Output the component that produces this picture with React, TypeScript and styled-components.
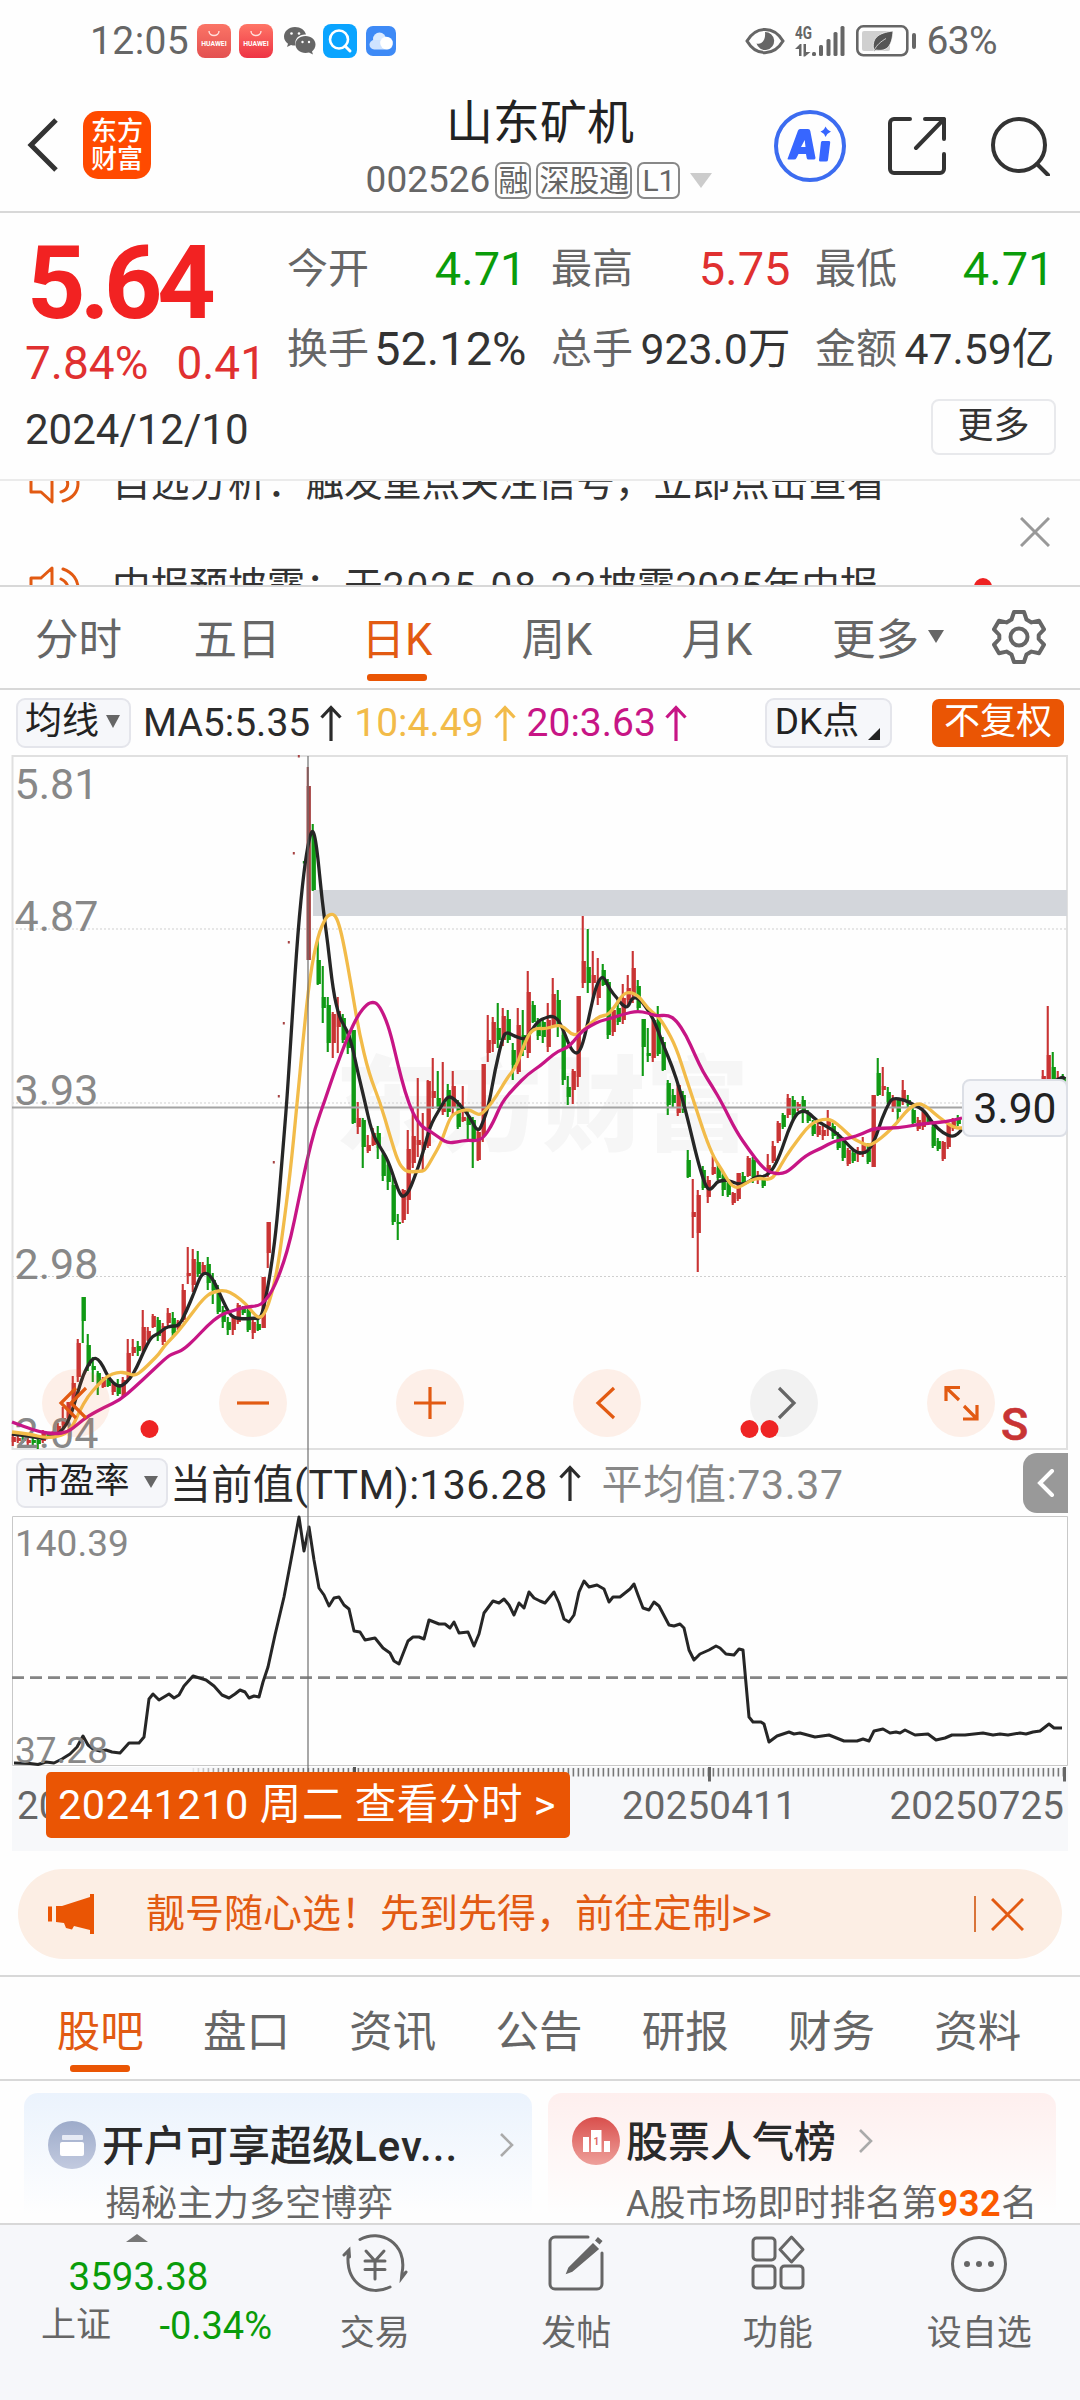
import React from "react";
import styled, { createGlobalStyle } from "styled-components";

const ORANGE = "#ea5504";
const ORANGE_TEXT = "#e25a12";
const RED = "#e03030";
const GREEN = "#0a9c0a";
const INK = "#2b2b2b";
const GREY = "#666";
const LINE = "#d8d8d8";

const Global = createGlobalStyle`
  * { box-sizing: border-box; }
  body { margin: 0; background: #fff; }
  svg { display: block; flex: none; }
`;

const Screen = styled.main`
  width: 1080px;
  height: 2400px;
  overflow: hidden;
  display: flex;
  flex-direction: column;
  background: #fefefe;
  color: ${INK};
  font-family: Roboto, "Noto Sans CJK SC", sans-serif;
  white-space: nowrap;
`;

/* ---------- status bar ---------- */

const StatusBar = styled.header`
  height: 82px;
  padding: 0 83px 0 90px;
  display: flex;
  align-items: center;
  justify-content: space-between;
  color: ${GREY};
`;
const StatusGroup = styled.div`
  display: flex;
  align-items: center;
`;
const StatusText = styled.span<{ $spacing?: number }>`
  font-size: 39px;
  line-height: 82px;
  letter-spacing: ${(p) => p.$spacing ?? 0}px;
`;

/* ---------- title bar ---------- */

const TitleBar = styled.div`
  height: 131px;
  padding: 0 30px 0 27px;
  border-bottom: 2px solid ${LINE};
  display: grid;
  grid-template-columns: 320px 1fr 320px;
`;
const TitleLeft = styled.div`
  display: flex;
  align-items: center;
  gap: 26px;
  padding-bottom: 3px;
`;
const BrandLogo = styled.div`
  width: 68px;
  height: 68px;
  margin-left: -2px;
  border-radius: 15px;
  background: #ff4a00;
  color: #fff;
  font-size: 26px;
  font-weight: 500;
  line-height: 28px;
  padding-top: 6px;
  text-align: center;
`;
const TitleMiddle = styled.div`
  display: flex;
  flex-direction: column;
  align-items: center;
`;
const StockName = styled.h1`
  margin: 13px 0 0 3px;
  font-size: 47px;
  font-weight: 400;
  line-height: 56px;
  color: #222;
`;
const CodeRow = styled.div`
  display: flex;
  align-items: center;
  height: 38px;
  margin: 10px 0 0 1px;
  color: ${GREY};
  gap: 5px;
`;
const Code = styled.span`
  font-size: 37px;
  line-height: 38px;
`;
const Tag = styled.span`
  height: 37px;
  padding: 0 1px;
  border: 2px solid #888;
  border-radius: 7px;
  font-size: 30px;
  line-height: 33px;
`;
const LevelTag = styled(Tag)`
  padding: 0 3px;
`;
const TitleRight = styled.div`
  display: flex;
  align-items: center;
  justify-content: flex-end;
  gap: 42px;
  padding-bottom: 2px;
`;

/* ---------- quote ---------- */

const Quote = styled.section`
  height: 268px;
  border-bottom: 2px solid #ebebeb;
  padding: 18px 24px 0 25px;
`;
const QuoteTop = styled.div`
  display: flex;
  height: 162px;
`;
const PriceBlock = styled.div`
  width: 262px;
  color: ${RED};
`;
const Price = styled.div`
  margin-left: 2px;
  font-size: 102px;
  font-weight: 700;
  line-height: 104px;
  letter-spacing: -5.5px;
  color: #f22222;
`;
const Change = styled.div`
  display: flex;
  gap: 28px;
  font-size: 46px;
  line-height: 56px;
`;
const Stats = styled.div`
  display: grid;
  grid-template-columns: repeat(3, 239.5px);
  grid-auto-rows: 80px;
  column-gap: 24.5px;
  margin-top: -2px;
`;
const Stat = styled.div`
  display: flex;
  justify-content: space-between;
  align-items: center;
  line-height: 74px;
`;
const StatLabel = styled.span`
  font-size: 41px;
  color: ${GREY};
`;
const StatValue = styled.span<{ $color?: string; $size?: number }>`
  font-size: ${(p) => p.$size ?? 47}px;
  color: ${(p) => p.$color ?? "#333"};
`;
const DateRow = styled.div`
  height: 68px;
  display: flex;
  justify-content: space-between;
  align-items: center;
`;
const DateText = styled.span`
  font-size: 42px;
  line-height: 74px;
  padding-top: 6px;
  color: #333;
`;
const MoreButton = styled.button`
  width: 125px;
  height: 56px;
  padding: 0 0 3px;
  border: 2px solid #e8e9ec;
  border-radius: 8px;
  background: transparent;
  font: inherit;
  font-size: 36px;
  line-height: 50px;
  color: #333;
`;

/* ---------- ticker ---------- */

const Ticker = styled.section`
  height: 106px;
  border-bottom: 2px solid ${LINE};
  display: flex;
  justify-content: space-between;
  overflow: hidden;
`;
const TickerRows = styled.div`
  margin-top: -50px;
`;
const TickerRow = styled.div`
  height: 104px;
  padding-left: 29px;
  display: flex;
  align-items: center;
  font-size: 38.7px;
  line-height: 104px;
  color: #333;
`;
const TickerText = styled.span`
  margin-left: 32px;
`;
const TickerDate = styled.span`
  letter-spacing: 2px;
`;
const TickerDot = styled.i`
  width: 18px;
  height: 18px;
  border-radius: 50%;
  background: #ee2222;
  margin-left: 95px;
`;
const TickerClose = styled.div`
  padding: 36px 30px 0 0;
`;

/* ---------- period tabs ---------- */

const PeriodTabs = styled.nav`
  height: 103px;
  border-bottom: 2px solid ${LINE};
  display: flex;
`;
const PeriodTab = styled.div<{ $active?: boolean; $width?: number }>`
  width: ${(p) => p.$width ?? 160}px;
  height: 101px;
  display: flex;
  align-items: center;
  justify-content: center;
  gap: 9px;
  font-size: 43.5px;
  color: ${(p) => (p.$active ? ORANGE_TEXT : GREY)};
  position: relative;
  padding-bottom: 3px;
  &::after {
    content: "";
    display: ${(p) => (p.$active ? "block" : "none")};
    position: absolute;
    left: 50%;
    bottom: 7px;
    width: 60px;
    height: 7px;
    margin-left: -30px;
    border-radius: 3px;
    background: ${ORANGE};
  }
`;
const Caret = styled.i<{ $w?: number; $h?: number; $color?: string }>`
  width: 0;
  height: 0;
  border-left: ${(p) => p.$w ?? 7}px solid transparent;
  border-right: ${(p) => p.$w ?? 7}px solid transparent;
  border-top: ${(p) => p.$h ?? 13}px solid ${(p) => p.$color ?? GREY};
`;

/* ---------- indicator rows ---------- */

const MaRow = styled.div`
  height: 65px;
  padding: 0 16px;
  display: flex;
  align-items: center;
  font-size: 39px;
`;
const Chip = styled.button<{ $width: number; $size?: number; $gap?: number }>`
  width: ${(p) => p.$width}px;
  height: 50px;
  padding: 0 2px 2px 0;
  border: 2px solid #e4e5eb;
  border-radius: 9px;
  background: #f6f7fa;
  display: flex;
  align-items: center;
  justify-content: center;
  gap: ${(p) => p.$gap ?? 7}px;
  font: inherit;
  font-size: ${(p) => p.$size ?? 37}px;
  line-height: 44px;
  color: #222;
`;
const MaValue = styled.span<{ $color: string; $left: number; $spacing?: number }>`
  margin-left: ${(p) => p.$left}px;
  color: ${(p) => p.$color};
  letter-spacing: ${(p) => p.$spacing ?? 0}px;
`;
const UpArrow = styled.span<{ $left?: number }>`
  display: flex;
  margin-left: ${(p) => p.$left ?? 10}px;
`;
const Spacer = styled.div`
  flex: 1;
`;
const AdjustButton = styled.button`
  width: 132px;
  height: 48px;
  margin-left: 40px;
  padding: 0 0 1px;
  border: 0;
  border-radius: 7px;
  background: ${ORANGE};
  color: #fff;
  font: inherit;
  font-size: 36px;
  line-height: 47px;
`;

const Charts = styled.section`
  position: relative;
  height: 1096px;
`;
const PeRow = styled.div`
  height: 65px;
  padding: 0 12px 0 16px;
  display: flex;
  align-items: center;
  font-size: 41px;
  color: #2b2b2b;
`;
const PeCurrent = styled.span`
  margin: -4px 0 0 2px;
  letter-spacing: 0.35px;
`;
const PeAverage = styled.span`
  margin: -4px 0 0 21px;
  color: #888;
  letter-spacing: 0.7px;
`;
const Collapse = styled.div`
  width: 45px;
  height: 60px;
  border-radius: 14px 0 0 14px;
  background: #999;
  display: flex;
  align-items: center;
  justify-content: center;
`;
const ChartControls = styled.div`
  position: absolute;
  left: 42px;
  top: 614px;
  display: flex;
  gap: 109px;
`;
const Control = styled.button<{ $muted?: boolean }>`
  width: 68px;
  height: 68px;
  padding: 0;
  border: 0;
  border-radius: 50%;
  background: ${(p) => (p.$muted ? "rgba(120,120,125,.09)" : "rgba(250,110,40,.1)")};
  color: ${(p) => (p.$muted ? GREY : ORANGE_TEXT)};
`;
const PriceLabel = styled.div`
  position: absolute;
  left: 962px;
  top: 324px;
  width: 106px;
  height: 58px;
  border: 2px solid #dcdfe6;
  border-radius: 8px;
  background: #f6f7fa;
  font-size: 42.5px;
  line-height: 56px;
  text-align: center;
  color: #222;
`;
const CrossLine = styled.i`
  position: absolute;
  left: 307px;
  top: 1px;
  width: 2px;
  height: 1016px;
  background: rgba(110, 110, 110, 0.6);
`;
const Axis = styled.div`
  height: 84px;
  margin: 0 12px;
  background: #f7f8fa;
`;
const DateTip = styled.div`
  position: absolute;
  left: 46px;
  top: 1017px;
  width: 524px;
  height: 66px;
  border-radius: 5px;
  background: ${ORANGE};
  color: #fff;
  font-size: 41.5px;
  line-height: 66px;
  letter-spacing: 0.55px;
  padding-left: 12px;
`;

/* ---------- promo, content tabs, cards ---------- */

const Promo = styled.section`
  height: 90px;
  margin: 18px 18px 16px;
  padding: 0 38px 0 30px;
  border-radius: 45px;
  background: #fceee4;
  color: ${ORANGE_TEXT};
  display: flex;
  align-items: center;
`;
const PromoText = styled.span`
  margin-left: 52px;
  font-size: 39px;
  line-height: 90px;
`;
const PromoDivider = styled.i`
  width: 2px;
  height: 36px;
  margin-right: 15px;
  background: #d9743a;
`;
const ContentTabs = styled.nav`
  height: 106px;
  border-top: 2px solid ${LINE};
  border-bottom: 2px solid ${LINE};
  padding: 0 29px 0 27px;
  display: flex;
`;
const ContentTab = styled(PeriodTab)`
  width: auto;
  flex: 1;
  height: 102px;
  padding-bottom: 0;
`;
const Cards = styled.section`
  height: 142px;
  padding: 12px 24px 0;
  display: grid;
  grid-template-columns: 508px 508px;
  gap: 16px;
  overflow: hidden;
`;
const Card = styled.article<{ $tint: string }>`
  height: 150px;
  padding: 0 24px;
  border-radius: 14px;
  background: linear-gradient(${(p) => p.$tint}, #fefefe 122px);
`;
const CardHead = styled.div<{ $top: number }>`
  display: flex;
  align-items: center;
  height: 60px;
  margin-top: ${(p) => p.$top}px;
`;
const CardTitle = styled.h2`
  margin: 3px 0 0 6px;
  font-size: 42px;
  font-weight: 500;
  line-height: 60px;
  color: #2a2a2a;
`;
const LatinPart = styled.span`
  letter-spacing: 1px;
`;
const CardSub = styled.p<{ $left: number; $top: number; $size: number }>`
  margin: ${(p) => p.$top}px 0 0 ${(p) => p.$left}px;
  font-size: ${(p) => p.$size}px;
  line-height: 40px;
  color: ${GREY};
  b {
    color: #fb5a00;
    letter-spacing: 0.6px;
  }
`;

/* ---------- bottom bar ---------- */

const BottomBar = styled.footer`
  flex: 1;
  border-top: 2px solid ${LINE};
  background: #f6f7fa;
  display: grid;
  grid-template-columns: 274px repeat(4, 201.5px);
`;
const IndexCell = styled.div`
  display: flex;
  flex-direction: column;
  align-items: center;
  padding-top: 9px;
  color: ${GREEN};
`;
const IndexValue = styled.div`
  font-size: 38.5px;
  line-height: 50px;
  margin: 10px 0 0 3px;
`;
const IndexRow = styled.div`
  width: 274px;
  padding: 0 2px 0 41px;
  display: flex;
  justify-content: space-between;
  font-size: 38px;
  line-height: 48px;
`;
const IndexName = styled.span`
  font-size: 35px;
  color: ${GREY};
`;
const Action = styled.div`
  display: flex;
  flex-direction: column;
  align-items: center;
  padding-top: 8px;
  font-size: 35px;
  line-height: 50px;
  gap: 16px;
  color: ${GREY};
`;

/* ---------- chart data ---------- */

type Candle = [number, number, number, number, number, "r" | "g"];

/* slot, high, body top, body bottom, low (in plot pixels), direction */
const CANDLES: Candle[] = [
  [0,1434,1437,1442,1446,"r"],[1,1436,1438,1441,1443,"r"],[2,1436,1438,1441,1443,"g"],[3,1438,1440,1443,1445,"r"],[4,1437,1440,1443,1446,"g"],
  [5,1438,1440,1444,1449,"g"],[6,1430,1433,1441,1443,"r"],[7,1432,1434,1437,1439,"g"],[8,1431,1433,1436,1438,"r"],[9,1423,1426,1434,1435,"r"],
  [10,1407,1418,1425,1428,"r"],[11,1402,1402,1418,1420,"r"],[12,1376,1383,1406,1408,"r"],[13,1339,1343,1377,1382,"r"],[14,1297,1297,1321,1343,"g"],
  [15,1334,1345,1366,1371,"g"],[16,1357,1366,1370,1382,"g"],[17,1371,1373,1384,1395,"g"],[18,1377,1379,1387,1388,"r"],[19,1378,1380,1386,1387,"g"],
  [20,1382,1384,1392,1395,"r"],[21,1379,1384,1394,1396,"g"],[22,1377,1380,1397,1398,"r"],[23,1339,1353,1380,1382,"r"],[24,1339,1347,1353,1356,"r"],
  [25,1341,1346,1351,1356,"g"],[26,1310,1327,1350,1352,"r"],[27,1327,1331,1340,1341,"r"],[28,1314,1316,1327,1328,"r"],[29,1317,1320,1336,1341,"g"],
  [30,1323,1326,1342,1345,"r"],[31,1308,1313,1323,1327,"r"],[32,1312,1318,1333,1336,"g"],[33,1320,1322,1328,1330,"r"],[34,1284,1290,1320,1322,"r"],
  [35,1247,1273,1276,1284,"r"],[36,1249,1259,1285,1292,"r"],[37,1251,1262,1274,1277,"g"],[38,1262,1265,1273,1274,"r"],[39,1257,1264,1283,1290,"g"],
  [40,1273,1280,1290,1304,"g"],[41,1285,1292,1312,1314,"g"],[42,1306,1310,1322,1328,"g"],[43,1317,1322,1330,1335,"g"],[44,1315,1318,1330,1335,"r"],
  [45,1303,1305,1322,1324,"r"],[46,1306,1308,1313,1315,"g"],[47,1305,1310,1330,1332,"g"],[48,1320,1322,1333,1339,"r"],[49,1318,1324,1330,1331,"g"],
  [50,1277,1277,1328,1328,"r"],[51,1222,1222,1253,1268,"r"],[52,1161,1161,1163,1163,"r"],[53,1095,1095,1097,1097,"r"],[54,1022,1022,1024,1024,"r"],
  [55,941,941,943,943,"r"],[56,852,852,854,854,"r"],[57,755,755,757,757,"r"],[58,861,861,864,864,"g"],[59,767,786,960,960,"r"],
  [60,824,836,890,891,"g"],[61,940,960,984,985,"g"],[62,966,997,1008,1023,"g"],[63,997,1005,1043,1052,"g"],[64,1012,1014,1043,1058,"r"],
  [65,997,1011,1027,1053,"r"],[66,1014,1018,1040,1043,"g"],[67,1032,1035,1048,1054,"g"],[68,1030,1030,1123,1124,"g"],[69,1102,1118,1127,1134,"r"],
  [70,1118,1120,1147,1168,"g"],[71,1135,1145,1151,1153,"r"],[72,1128,1133,1145,1146,"r"],[73,1126,1133,1148,1159,"g"],[74,1150,1155,1176,1181,"g"],
  [75,1160,1165,1182,1190,"g"],[76,1176,1185,1222,1225,"g"],[77,1214,1222,1224,1240,"g"],[78,1189,1190,1220,1223,"r"],[79,1130,1149,1200,1214,"r"],
  [80,1107,1136,1163,1168,"r"],[81,1078,1140,1145,1157,"r"],[82,1113,1142,1150,1171,"r"],[83,1080,1081,1146,1148,"r"],[84,1058,1091,1098,1109,"r"],
  [85,1071,1098,1107,1109,"g"],[86,1062,1103,1112,1115,"r"],[87,1084,1090,1112,1117,"g"],[88,1071,1086,1108,1116,"r"],[89,1100,1103,1127,1129,"g"],
  [90,1086,1117,1121,1122,"r"],[91,1111,1118,1125,1140,"g"],[92,1117,1120,1142,1168,"g"],[93,1130,1132,1160,1161,"r"],[94,1064,1064,1136,1142,"r"],
  [95,1015,1040,1053,1062,"r"],[96,1017,1022,1044,1052,"r"],[97,1003,1028,1040,1048,"g"],[98,1008,1016,1040,1046,"r"],[99,1010,1019,1040,1043,"g"],
  [100,1043,1050,1065,1080,"g"],[101,1008,1025,1072,1074,"r"],[102,1010,1035,1050,1056,"g"],[103,971,992,1053,1058,"r"],[104,1001,1005,1022,1023,"g"],
  [105,1018,1022,1036,1040,"g"],[106,1019,1022,1037,1043,"g"],[107,1003,1020,1047,1052,"r"],[108,978,994,1025,1028,"r"],[109,990,1000,1025,1037,"g"],
  [110,1030,1035,1080,1085,"g"],[111,1076,1087,1097,1105,"g"],[112,1069,1071,1090,1104,"r"],[113,996,996,1077,1087,"r"],[114,916,961,983,988,"r"],
  [115,929,967,983,993,"g"],[116,951,975,983,1000,"r"],[117,958,980,998,1005,"r"],[118,964,970,985,986,"g"],[119,979,982,1035,1039,"g"],
  [120,1007,1010,1032,1036,"r"],[121,998,1008,1022,1025,"g"],[122,984,998,1020,1024,"r"],[123,975,988,1000,1005,"r"],[124,951,968,995,1003,"r"],
  [125,980,986,1008,1010,"g"],[126,1019,1019,1047,1076,"g"],[127,1028,1053,1056,1062,"g"],[128,1018,1020,1058,1062,"r"],[129,1006,1020,1054,1056,"g"],
  [130,1037,1042,1070,1071,"g"],[131,1080,1083,1105,1115,"g"],[132,1089,1095,1103,1107,"g"],[133,1082,1085,1113,1116,"r"],[134,1091,1095,1110,1113,"g"],
  [135,1150,1160,1177,1178,"g"],[136,1179,1212,1217,1238,"r"],[137,1190,1195,1233,1272,"r"],[138,1166,1170,1188,1190,"g"],[139,1176,1180,1197,1203,"r"],
  [140,1156,1167,1174,1175,"r"],[141,1163,1168,1178,1180,"g"],[142,1171,1175,1190,1196,"g"],[143,1180,1183,1195,1197,"g"],[144,1192,1193,1203,1205,"r"],
  [145,1173,1173,1199,1201,"r"],[146,1172,1176,1184,1186,"g"],[147,1156,1158,1176,1177,"r"],[148,1157,1160,1177,1183,"g"],[149,1171,1175,1180,1184,"r"],
  [150,1175,1180,1186,1188,"g"],[151,1154,1165,1174,1177,"r"],[152,1141,1146,1161,1163,"r"],[153,1121,1123,1141,1143,"r"],[154,1113,1115,1127,1129,"g"],
  [155,1094,1098,1115,1118,"r"],[156,1096,1100,1115,1120,"g"],[157,1102,1104,1109,1111,"r"],[158,1096,1100,1112,1123,"g"],[159,1110,1113,1121,1123,"g"],
  [160,1120,1124,1134,1136,"g"],[161,1123,1126,1135,1137,"r"],[162,1126,1130,1136,1140,"r"],[163,1110,1120,1126,1136,"r"],[164,1123,1126,1136,1139,"g"],
  [165,1132,1136,1148,1150,"g"],[166,1137,1140,1158,1161,"g"],[167,1148,1150,1164,1166,"r"],[168,1149,1153,1161,1163,"g"],[169,1147,1152,1155,1162,"r"],
  [170,1137,1145,1154,1157,"r"],[171,1143,1150,1162,1164,"g"],[172,1095,1095,1167,1167,"r"],[173,1058,1073,1095,1096,"g"],[174,1067,1086,1090,1096,"r"],
  [175,1087,1092,1102,1104,"g"],[176,1095,1098,1108,1112,"r"],[177,1098,1100,1112,1123,"g"],[178,1080,1090,1100,1105,"r"],[179,1095,1100,1105,1107,"g"],
  [180,1107,1110,1123,1125,"g"],[181,1117,1120,1129,1131,"r"],[182,1107,1112,1127,1130,"r"],[183,1115,1117,1123,1125,"g"],[184,1123,1127,1146,1148,"g"],
  [185,1138,1141,1149,1151,"g"],[186,1141,1142,1159,1161,"r"],[187,1120,1125,1147,1149,"r"],[188,1118,1121,1129,1131,"r"],[189,1115,1118,1124,1126,"g"],
  [206,1070,1076,1082,1084,"r"],[207,1006,1055,1084,1086,"r"],[208,1052,1067,1082,1084,"g"],[209,1071,1077,1084,1084,"r"],[210,1074,1077,1084,1084,"g"],
];

const MA5 = [[12,1434,30,1436,42,1439,54,1436,63,1430,70,1418,77,1395,83,1375,90,1362,94,1358,98,1359,103,1366,109,1379,117,1386,122,1386,130,1379,137,1367,143,1353,151,1337,158,1334,165,1328,171,1326,179,1326,186,1312,194,1293,200,1277,204,1273,209,1274,215,1283,222,1299,229,1313,234,1318,245,1319,255,1318,258,1319,262,1315,267,1292,272,1262,277,1222,282,1160,287,1100,292,1020,298,930,304,870,309,839,313,828,317,848,322,900,328,945,333,990,339,1017,347,1030,352,1045,358,1073,364,1098,372,1133,380,1147,388,1160,396,1184,400,1194,403,1197,408,1193,414,1179,423,1153,430,1126,439,1110,447,1097,452,1097,461,1106,470,1117,478,1133,484,1120,489,1104,495,1070,503,1036,507,1032,512,1035,525,1040,530,1033,538,1021,545,1018,551,1016,557,1018,563,1029,569,1045,574,1053,579,1053,584,1040,590,1012,595,990,600,978,604,977,610,990,617,998,622,1005,628,1008,632,997,640,999,650,1013,656,1025,664,1047,672,1066,680,1090,688,1120,697,1158,704,1182,709,1191,715,1185,718,1181,728,1180,737,1184,745,1184,757,1176,764,1177,772,1171,780,1155,788,1131,796,1114,802,1111,808,1112,818,1122,830,1128,840,1136,850,1147,857,1153,867,1153,875,1140,882,1118,889,1103,893,1098,905,1100,914,1105,924,1110,933,1124,943,1133,952,1137,958,1134,962,1129],[1055,1081,1060,1078,1063,1077,1065,1079]];
const MA10 = [[12,1432,30,1434,45,1438,62,1436,72,1428,79,1412,88,1396,98,1385,107,1376,118,1372,127,1373,135,1376,143,1370,152,1361,159,1354,165,1345,178,1332,190,1316,203,1299,212,1292,225,1290,235,1295,246,1304,254,1314,259,1318,264,1315,270,1300,277,1272,283,1230,290,1175,297,1105,303,1040,310,975,318,935,326,917,331,914,335,915,339,924,344,945,352,990,359,1032,369,1074,380,1102,390,1136,398,1162,405,1171,412,1172,420,1171,425,1171,433,1157,441,1143,450,1117,457,1112,468,1109,475,1113,480,1115,486,1110,496,1097,507,1078,516,1067,524,1045,530,1032,537,1028,545,1029,558,1025,564,1027,571,1034,577,1035,585,1029,592,1022,600,1016,608,1015,616,1005,623,994,630,992,639,996,648,1009,658,1016,666,1028,676,1047,686,1078,695,1105,705,1136,714,1158,722,1170,730,1184,736,1188,742,1186,751,1180,760,1178,770,1180,776,1174,786,1156,797,1141,806,1129,814,1122,824,1119,832,1120,842,1128,852,1138,860,1142,868,1146,876,1142,886,1134,896,1124,908,1109,918,1103,926,1106,935,1114,944,1121,955,1128,962,1128]];
const MA20 = [[12,1422,25,1427,40,1432,55,1434,68,1432,78,1424,88,1416,105,1407,120,1400,135,1387,150,1373,168,1356,175,1353,183,1350,195,1339,207,1326,220,1315,232,1311,245,1307,258,1306,264,1302,273,1290,283,1265,291,1237,298,1203,307,1160,315,1128,325,1100,335,1070,348,1036,358,1015,367,1004,373,1002,378,1004,385,1017,391,1035,398,1065,405,1092,413,1114,422,1127,430,1131,441,1139,448,1143,457,1142,467,1140,478,1141,485,1136,493,1123,502,1102,515,1087,528,1074,540,1066,548,1059,558,1051,567,1048,574,1041,582,1031,592,1025,600,1021,612,1018,624,1014,637,1011,648,1013,656,1016,668,1015,676,1020,686,1035,695,1055,703,1072,712,1086,722,1103,736,1131,749,1150,762,1167,771,1173,782,1174,790,1170,806,1155,822,1148,834,1141,850,1138,862,1134,872,1129,882,1128,898,1128,915,1125,930,1123,945,1122,962,1118]];
const PE = [14,1763,30,1763.5,38,1764.5,46,1762,54,1763,62,1759,70,1754,77,1747,83,1736,88,1745,93,1749,100,1751,106,1750,112,1752,120,1753,129,1743,139,1743,144,1737,149,1699,153,1694,159,1700,169,1694,174,1698,179,1695,184,1686,193,1676,206,1680,214,1686,222,1695,229,1698,235,1694,240,1690,245,1692,249,1698,254,1696,259,1697,263,1682,268,1667,275,1635,284,1597,291,1560,299,1517,304,1551,309,1527,314,1560,319,1588,324,1595,329,1606,334,1598,339,1597,344,1605,349,1609,354,1631,360,1632,365,1640,375,1638,383,1648,390,1653,394,1661,399,1664,408,1641,413,1637,419,1637,424,1639,429,1620,439,1624,445,1624,450,1628,454,1622,459,1633,468,1632,474,1646,479,1634,484,1613,493,1601,499,1603,504,1599,509,1605,514,1615,519,1603,524,1608,529,1592,534,1598,540,1601,545,1603,554,1592,559,1603,564,1619,569,1622,574,1615,579,1592,584,1581,589,1587,597,1585,604,1589,609,1602,613,1597,620,1597,630,1589,634,1584,638,1595,643,1608,649,1610,654,1602,659,1606,669,1625,674,1626,680,1624,684,1628,689,1650,694,1660,700,1654,709,1650,716,1646,720,1648,726,1654,734,1655,739,1649,743,1650,749,1717,753,1722,761,1722,764,1724,769,1742,777,1736,789,1732,794,1734,800,1733,815,1737,829,1735,844,1741,857,1741,863,1739,869,1741,874,1731,883,1729,890,1733,896,1732,900,1733,905,1730,915,1735,928,1734,936,1740,945,1738,952,1735,965,1735,983,1733,993,1735,1000,1734,1008,1735,1020,1733,1026,1734,1033,1732,1040,1731,1049,1724,1054,1728,1062,1728];

/* Quadratic smoothing through the midpoints of a flat x,y list. */
const smooth = (flat: number[]) => {
  let d = `M${flat[0]} ${flat[1]}`;
  for (let i = 2; i < flat.length - 2; i += 2) {
    const mx = (flat[i] + flat[i + 2]) / 2;
    const my = (flat[i + 1] + flat[i + 3]) / 2;
    d += `Q${flat[i]} ${flat[i + 1]} ${mx} ${my}`;
  }
  return d + `L${flat[flat.length - 2]} ${flat[flat.length - 1]}`;
};

const CHART_FONT = 'Roboto, "Noto Sans CJK SC", sans-serif';

const KLineChart = () => (
  <svg width="1080" height="695" viewBox="0 755 1080 695" fontFamily={CHART_FONT}>
    <text x="335" y="1143" fontSize="103.500" fontWeight="900" fill="#f6f6f6" fontFamily='"Noto Sans CJK SC", sans-serif'>东方财富</text>
    {[929, 1103, 1276.5].map((y) => (
      <line key={y} x1="12" x2="1068" y1={y} y2={y} stroke="#cfcfcf" strokeWidth="1" strokeDasharray="2 2" />
    ))}
    <path d="M12.5 756H1067V1449H12.5Z" fill="none" stroke="#e0e0e0" strokeWidth="2" />
    <rect x="313" y="890" width="754" height="26" fill="#d3d6db" />
    <g>
      {CANDLES.map(([slot, high, top, bottom, low, dir]) => {
        const x = 12.6 + slot * 5;
        const fill = dir === "r" ? (slot >= 52 && slot <= 59 ? "#a64242" : "#c93434") : "#109a14";
        if (low - high < 4) return <rect key={slot} x={x + 0.2} y={high} width="2" height="2.5" fill={fill} />;
        return (
          <g key={slot} fill={fill}>
            <rect x={x - 0.9} y={high} width="2.1" height={low - high} />
            <rect x={x - 0.9} y={top} width="4.2" height={bottom - top} />
          </g>
        );
      })}
    </g>
    <line x1="12" x2="962" y1="1107.5" y2="1107.5" stroke="#a4a4a4" strokeWidth="2" />
    <g fill="#888" fontSize="43">
      <text x="14.500" y="798.500">5.81</text>
      <text x="14.500" y="931">4.87</text>
      <text x="14.500" y="1104.500">3.93</text>
      <text x="14.500" y="1278.500">2.98</text>
      <text x="14.500" y="1447.500">2.04</text>
    </g>
    <g fill="none" strokeWidth="3.3" strokeLinejoin="round">
      {MA5.map((s, i) => <path key={i} d={smooth(s)} stroke="#262626" />)}
      {MA10.map((s, i) => <path key={i} d={smooth(s)} stroke="#f2bb49" />)}
      {MA20.map((s, i) => <path key={i} d={smooth(s)} stroke="#c71585" />)}
    </g>
  </svg>
);

const Markers = styled.svg`
  position: absolute;
  left: 0;
  top: 640px;
`;

const PeChart = () => (
  <svg width="1080" height="252" viewBox="0 1515 1080 252" fontFamily={CHART_FONT}>
    <path d="M12.5 1516.5H1067.5V1765.5H12.5Z" fill="none" stroke="#c8c8c8" />
    <path d="M12 1677.7H1067" stroke="#858585" strokeWidth="2.8" strokeDasharray="12 6" />
    <polyline points={PE.join(" ")} fill="none" stroke="#262626" strokeWidth="3" strokeLinejoin="round" />
    <g fill="#888" fontSize="37">
      <text x="15" y="1556">140.39</text>
      <text x="15" y="1762.500">37.28</text>
    </g>
  </svg>
);

const TICKS = Array.from({ length: 175 }, (_, i) => 192.6 + i * 5);

const AxisChart = () => (
  <svg width="1056" height="84" viewBox="12 1767 1056 84" fontFamily={CHART_FONT} fontSize="38.500" fill={GREY}>
    {TICKS.map((x) => (
      <rect key={x} x={x} y="1768" width="1.6" height="8.5" fill="#777" opacity={x < 230 ? (x - 185) / 45 : 1} />
    ))}
    <rect x="353" y="1767" width="3" height="14" fill="#555" />
    <rect x="708" y="1767" width="3" height="14.5" />
    <rect x="1063" y="1767" width="3" height="14.5" />
    <text x="17" y="1819">20240822</text>
    <text x="622" y="1819" letterSpacing=".2">20250411</text>
    <text x="889.500" y="1819" letterSpacing=".2">20250725</text>
  </svg>
);

/* ---------- icons ---------- */

const Bag = ({ fill, light }: { fill: string; light: string }) => (
  <svg width="34" height="34" viewBox="0 0 34 34" style={{ marginLeft: 8 }}>
    <defs>
      <linearGradient id={fill.slice(1)} x1="0" y1="0" x2="0" y2="1">
        <stop stopColor={light} /><stop offset="1" stopColor={fill} />
      </linearGradient>
    </defs>
    <rect width="34" height="34" rx="8" fill={`url(#${fill.slice(1)})`} />
    <path d="M12 7c0 6 10 6 10 0" fill="none" stroke="#ffe0dc" strokeWidth="1.4" />
    <text x="17" y="22" textAnchor="middle" fontSize="6.8" fontWeight="700" fill="#fff" fontFamily="Roboto">HUAWEI</text>
  </svg>
);

const Arrow = ({ color, left }: { color: string; left?: number }) => (
  <UpArrow $left={left}>
    <svg width="22" height="36" viewBox="0 0 22 36" fill="none" stroke={color} strokeWidth="3.2">
      <path d="M11 36V2.5M1.5 12.500L11 2.500l9.500 10" />
    </svg>
  </UpArrow>
);

const Speaker = () => (
  <svg width="51" height="42" viewBox="0 0 51 42" fill="none" stroke={ORANGE_TEXT} strokeWidth="3" strokeLinecap="round" strokeLinejoin="round">
    <path d="M12 12H2V30H12L23 40V2L12 12" />
    <path d="M34 3C54 10 54 34 34 39M32 13C41 17 41 27 32 30" />
  </svg>
);

const Cross = ({ size, color, width = 3 }: { size: number; color: string; width?: number }) => (
  <svg width={size} height={size} viewBox={`0 0 ${size} ${size}`}>
    <path d={`M1 1L${size - 1} ${size - 1}M${size - 1} 1L1 ${size - 1}`} stroke={color} strokeWidth={width} />
  </svg>
);

const Chevron = () => (
  <svg width="15" height="24" viewBox="0 0 15 24" fill="none" stroke="#aaa" strokeWidth="2.6">
    <path d="M2 1l11 11L2 23" />
  </svg>
);

const CONTROL_PATHS = [
  "M34 19L19 34l15 15M44 19L29 34l15 15",
  "M18 34h32",
  "M18 34h32M34 18v32",
  "M41 19L25 34l16 15",
  "M29 19l15 15-15 15",
  "M33 18.500H19V32M19 18.500L32 31M50 36V50H36M50 50L37 37",
];

const PERIODS = ["五日", "日K", "周K", "月K"];
const SECTIONS = ["股吧", "盘口", "资讯", "公告", "研报", "财务", "资料"];

export default function App() {
  return (
    <Screen>
      <Global />
      <StatusBar>
        <StatusGroup>
          <StatusText $spacing={0.4}>12:05</StatusText>
          <Bag fill="#e35151" light="#fb7466" />
          <Bag fill="#ee3344" light="#ff7566" />
          <svg width="33" height="30" viewBox="0 0 33 30" style={{ marginLeft: 10 }}>
            <path d="M12 1C5.500 1 1 5.500 1 10.500c0 3 1.500 5.500 4 7.200L4 21l4-2c1.400.4 3 .6 4.500.5C11 12 17 8 23 8.500 22 4 17.500 1 12 1Z" fill="#666" />
            <path d="M22.500 10c-6 0-10 4-10 8.500s4.500 8.500 10 8.500c1.200 0 2.400-.2 3.500-.5l4 2-1-3c2-1.700 3.500-4 3.500-7C32.500 14 28.500 10 22.500 10Z" fill="#666" />
            <g fill="#fff"><circle cx="8.500" cy="7.500" r="1.300" /><circle cx="16" cy="7.500" r="1.300" /><circle cx="19.500" cy="16" r="1.200" /><circle cx="26" cy="16" r="1.200" /></g>
          </svg>
          <svg width="34" height="34" viewBox="0 0 34 34" style={{ marginLeft: 7 }}>
            <rect width="34" height="34" rx="8" fill="#0aa4ff" />
            <circle cx="16" cy="15.500" r="9" fill="none" stroke="#fff" strokeWidth="2.600" />
            <path d="M22 22l5 5" stroke="#fff" strokeWidth="3" strokeLinecap="round" />
          </svg>
          <svg width="30" height="30" viewBox="0 0 30 30" style={{ marginLeft: 9 }}>
            <rect width="30" height="30" rx="7" fill="#3e8af6" />
            <circle cx="13.500" cy="13" r="6.500" fill="#dcebff" />
            <rect x="3.500" y="14" width="23" height="9.500" rx="4.700" fill="#cfe3ff" />
            <circle cx="20.500" cy="17" r="6.300" fill="#fff" />
          </svg>
        </StatusGroup>
        <StatusGroup>
          <svg width="40" height="28" viewBox="0 0 40 28">
            <path d="M2 14C11-1.500 29-1.500 38 14 29 29.500 11 29.500 2 14Z" fill="none" stroke="#666" strokeWidth="3" />
            <path d="M20 5a9 9 0 1 1-8.500 11.500C16 18 21 14 20 5Z" fill="#666" />
          </svg>
          <svg width="52" height="34" viewBox="0 0 52 34" style={{ marginLeft: 10 }} fill="#666">
            <text x="0" y="14.500" fontSize="18" fontWeight="700" fontFamily="Roboto" textLength="17" lengthAdjust="spacingAndGlyphs">4G</text>
            <path d="M0 25l5-5h1.500v12H4V25ZM8.500 20H11v8h4.500L10 32.500H8.500Z" />
            <rect x="17" y="28" width="4" height="4" rx="1.500" />
            <rect x="24" y="21" width="4" height="11" rx="1.500" />
            <rect x="31.500" y="15" width="4" height="17" rx="1.500" />
            <rect x="38.500" y="8" width="4" height="24" rx="1.500" />
            <rect x="45.500" y="2" width="4" height="30" rx="1.500" />
          </svg>
          <svg width="61" height="32" viewBox="0 0 61 32" style={{ marginLeft: 9 }}>
            <rect x="1.300" y="1.300" width="50" height="29" rx="6" fill="none" stroke="#666" strokeWidth="2.600" />
            <rect x="6" y="6" width="28" height="20" rx="2" fill="#d0d0d0" />
            <path d="M37 6C36 20 32 27 20 25l-2 1.500C15 13 22 8 37 6ZM18 25.500c3-6 7-9 12-12" fill="#555" stroke="#fff" strokeWidth=".7" />
            <rect x="56" y="8" width="4" height="16" rx="2" fill="#666" />
          </svg>
          <StatusText $spacing={-0.6} style={{ marginLeft: 9 }}>63%</StatusText>
        </StatusGroup>
      </StatusBar>

      <TitleBar>
        <TitleLeft>
          <svg width="32" height="54" viewBox="0 0 32 54" fill="none" stroke="#333" strokeWidth="5">
            <path d="M29 2L4 27l25 25" />
          </svg>
          <BrandLogo>东方<br />财富</BrandLogo>
        </TitleLeft>
        <TitleMiddle>
          <StockName>山东矿机</StockName>
          <CodeRow>
            <Code>002526</Code>
            <Tag>融</Tag>
            <Tag>深股通</Tag>
            <LevelTag>L1</LevelTag>
            <Caret $w={11} $h={15} $color="#ccc" style={{ marginLeft: 5 }} />
          </CodeRow>
        </TitleMiddle>
        <TitleRight>
          <svg width="72" height="72" viewBox="0 0 72 72">
            <circle cx="36" cy="36" r="34" fill="none" stroke="#3c6cf0" strokeWidth="4" />
            <path d="M13.500 49L24 20.500q.6-1.500 2-1.500h8q2 0 2.300 2L41.500 48q0 1.500-2 1.500h-5q-1.500 0-1.800-1.500l-.7-4h-7.500l-2 4q-.7 1.500-2.500 1.500H14.500q-1.300 0-1-1.200ZM27 37h4.500l-.8-7Z" fill="#3766ff" />
            <path d="M48 31h7q1.500 0 1.200 1.500L54 50q-.2 1.500-2 1.500h-5.500q-1.700 0-1.500-1.500L47 32Z" fill="#3766ff" />
            <path d="M51.500 16.500q2 4 5.500 5-3.500 1.500-5.500 5.500-1.500-4-5-5.500 3.500-1 5-5Z" fill="#3766ff" />
          </svg>
          <svg width="58" height="58" viewBox="0 0 58 58" fill="none" stroke="#333" strokeWidth="4" strokeLinecap="round" strokeLinejoin="round" style={{ marginRight: 2 }}>
            <path d="M22 2H6a4 4 0 0 0-4 4V52a4 4 0 0 0 4 4H52a4 4 0 0 0 4-4V37M37 2H56V22M56 2L28 31" />
          </svg>
          <svg width="60" height="60" viewBox="0 0 60 60" fill="none" stroke="#333" strokeWidth="4" strokeLinecap="round">
            <circle cx="29" cy="29" r="26" /><path d="M47 48l11 11" />
          </svg>
        </TitleRight>
      </TitleBar>

      <Quote>
        <QuoteTop>
          <PriceBlock>
            <Price>5.64</Price>
            <Change><span>7.84%</span><span>0.41</span></Change>
          </PriceBlock>
          <Stats>
            <Stat><StatLabel>今开</StatLabel><StatValue $color={GREEN}>4.71</StatValue></Stat>
            <Stat><StatLabel>最高</StatLabel><StatValue $color={RED}>5.75</StatValue></Stat>
            <Stat><StatLabel>最低</StatLabel><StatValue $color={GREEN}>4.71</StatValue></Stat>
            <Stat><StatLabel>换手</StatLabel><StatValue>52.12%</StatValue></Stat>
            <Stat><StatLabel>总手</StatLabel><StatValue $size={42.7}>923.0万</StatValue></Stat>
            <Stat><StatLabel>金额</StatLabel><StatValue $size={42.7}>47.59亿</StatValue></Stat>
          </Stats>
        </QuoteTop>
        <DateRow>
          <DateText>2024/12/10</DateText>
          <MoreButton>更多</MoreButton>
        </DateRow>
      </Quote>

      <Ticker>
        <TickerRows>
          <TickerRow><Speaker /><TickerText>自选分析：触发重点关注信号，立即点击查看</TickerText></TickerRow>
          <TickerRow>
            <Speaker />
            <TickerText>中报预披露：于<TickerDate>2025-08-22</TickerDate>披露2025年中报</TickerText>
            <TickerDot />
          </TickerRow>
        </TickerRows>
        <TickerClose><Cross size={30} color="#999" /></TickerClose>
      </Ticker>

      <PeriodTabs>
        <PeriodTab $width={157}>分时</PeriodTab>
        {PERIODS.map((p) => <PeriodTab key={p} $active={p === "日K"}>{p}</PeriodTab>)}
        <PeriodTab $width={182}>更多<Caret $w={8} $h={13} /></PeriodTab>
        <svg width="54" height="54" viewBox="0 0 54 54" fill="none" stroke={GREY} strokeWidth="4" strokeLinejoin="round" style={{ margin: "23px 0 0 13px" }}>
          <path d="M22 2h10l2.500 7.500 5 2.900 7.500-1.700 5 8.600-5.300 5.700v4l5.300 5.700-5 8.600-7.500-1.700-5 2.900L32 52H22l-2.500-7.500-5-2.900L7 43.300l-5-8.600L7.300 29v-4L2 19.300l5-8.600 7.500 1.700 5-2.900Z" />
          <circle cx="27" cy="27" r="8.500" />
        </svg>
      </PeriodTabs>

      <MaRow>
        <Chip $width={115}>均线<Caret $w={7} $h={13} /></Chip>
        <MaValue $color="#2b2b2b" $left={12} $spacing={0}>MA5:5.35</MaValue>
        <Arrow color="#2b2b2b" />
        <MaValue $color="#f2bb49" $left={12} $spacing={0}>10:4.49</MaValue>
        <Arrow color="#f2bb49" />
        <MaValue $color="#c71585" $left={11}>20:3.63</MaValue>
        <Arrow color="#c71585" left={9} />
        <Spacer />
        <Chip $width={127} $gap={9}>
          DK点
          <svg width="12" height="12" viewBox="0 0 12 12" style={{ marginTop: 24 }}><path d="M12 0V12H0Z" fill="#222" /></svg>
        </Chip>
        <AdjustButton>不复权</AdjustButton>
      </MaRow>

      <Charts>
        <KLineChart />
        <ChartControls>
          {CONTROL_PATHS.map((d, i) => (
            <Control key={d} $muted={i === 4}>
              <svg width="68" height="68" viewBox="0 0 68 68" fill="none" stroke="currentColor" strokeWidth="3.2"><path d={d} /></svg>
            </Control>
          ))}
        </ChartControls>
        <Markers width="1080" height="50" viewBox="0 1395 1080 50">
          <g fill="#ee2424"><circle cx="149.500" cy="1429" r="9" /><circle cx="749.500" cy="1429" r="9" /><circle cx="769.500" cy="1429" r="9" /></g>
          <text x="1001" y="1439.500" fontSize="45" fontWeight="500" fill="#c83434" stroke="#c83434" strokeWidth=".6" fontFamily="Roboto">S</text>
        </Markers>
        <PeRow>
          <Chip $width={152} $size={35} $gap={14}>市盈率<Caret $w={7} $h={12} /></Chip>
          <PeCurrent>当前值(TTM):136.28</PeCurrent>
          <Arrow color="#2b2b2b" left={11} />
          <PeAverage>平均值:73.37</PeAverage>
          <Spacer />
          <Collapse>
            <svg width="18" height="28" viewBox="0 0 18 28" fill="none" stroke="#fff" strokeWidth="4" strokeLinecap="round"><path d="M15 2L3 14l12 12" /></svg>
          </Collapse>
        </PeRow>
        <PeChart />
        <Axis><AxisChart /></Axis>
        <CrossLine />
        <PriceLabel>3.90</PriceLabel>
        <DateTip>20241210 周二 查看分时 &gt;</DateTip>
      </Charts>

      <Promo>
        <svg width="46" height="40" viewBox="0 0 46 40" fill={ORANGE}>
          <path d="M0 12.500h4v15H0ZM8 12h6L42 3V0h4v40h-4v-4l-16-4-2 3.500-6-1.500-2-5-8-1Z" />
        </svg>
        <PromoText>靓号随心选！先到先得，前往定制&gt;&gt;</PromoText>
        <Spacer />
        <PromoDivider />
        <Cross size={33} color={ORANGE_TEXT} width={3} />
      </Promo>

      <ContentTabs>
        {SECTIONS.map((s, i) => <ContentTab key={s} $active={i === 0}>{s}</ContentTab>)}
      </ContentTabs>

      <Cards>
        <Card $tint="#ebf3fd">
          <CardHead $top={22}>
            <svg width="48" height="48" viewBox="0 0 48 48">
              <defs><linearGradient id="vault" x1="0" y1="0" x2="0" y2="1"><stop stopColor="#9dabca" /><stop offset="1" stopColor="#c2cadf" /></linearGradient></defs>
              <circle cx="24" cy="24" r="24" fill="url(#vault)" />
              <rect x="14" y="14" width="21" height="5" rx="1" fill="#e6eaf4" />
              <rect x="12" y="21" width="24" height="14" rx="2" fill="#fff" />
            </svg>
            <CardTitle>开户可享超级<LatinPart>Lev...</LatinPart></CardTitle>
            <Spacer />
            <div style={{ marginRight: -6 }}><Chevron /></div>
          </CardHead>
          <CardSub $left={57} $top={9} $size={36}>揭秘主力多空博弈</CardSub>
        </Card>
        <Card $tint="#feefee">
          <CardHead $top={18}>
            <svg width="48" height="48" viewBox="0 0 48 48">
              <defs><linearGradient id="podium" x1="0" y1="0" x2="0" y2="1"><stop stopColor="#d94f4c" /><stop offset="1" stopColor="#eea09b" /></linearGradient></defs>
              <circle cx="24" cy="24" r="24" fill="url(#podium)" />
              <path d="M11 20h6v15h-6ZM19 13h10.500v22H19ZM32 24h6v11h-6Z" fill="#fff" />
              <text x="24.300" y="28" textAnchor="middle" fontSize="10" fontWeight="700" fill="#dd6a66" fontFamily="Roboto">1</text>
            </svg>
            <CardTitle>股票人气榜</CardTitle>
            <div style={{ marginLeft: 22 }}><Chevron /></div>
          </CardHead>
          <CardSub $left={54} $top={13} $size={36}>A股市场即时排名第<b>932</b>名</CardSub>
        </Card>
      </Cards>

      <BottomBar>
        <IndexCell>
          <svg width="22" height="8" viewBox="0 0 22 8"><path d="M0 8L11 0l11 8Z" fill="#777" /></svg>
          <IndexValue>3593.38</IndexValue>
          <IndexRow><IndexName>上证</IndexName><span>-0.34%</span></IndexRow>
        </IndexCell>
        <Action>
          <svg width="66" height="60" viewBox="0 0 66 60" fill="none" stroke={GREY} strokeWidth="3" strokeLinecap="round">
            <path d="M18 6.500C38-5 66 10 60 40M60 40l-.5 5 4.500-6M48 54C28 64 2 52 6.500 18M2 22l5-5 .5 7" />
            <path d="M24 18l9 10 9-10M33 28v18M23 28h20M23 36.500h20" />
          </svg>
          交易
        </Action>
        <Action>
          <svg width="60" height="60" viewBox="0 0 60 60" fill="none" stroke={GREY} strokeWidth="3" strokeLinecap="round">
            <path d="M42 4H9a5 5 0 0 0-5 5V51a5 5 0 0 0 5 5H51a5 5 0 0 0 5-5V20" />
            <path d="M47 11l5 5L26 38l-5 2 2-5ZM50 7.500l2-2.500 3.500 3-2 2.500Z" fill={GREY} strokeWidth="1.500" />
          </svg>
          发帖
        </Action>
        <Action>
          <svg width="60" height="60" viewBox="0 0 60 60" fill="none" stroke={GREY} strokeWidth="3">
            <rect x="5" y="5" width="22" height="22" rx="3.500" /><rect x="5" y="33" width="22" height="22" rx="3.500" /><rect x="33" y="33" width="22" height="22" rx="3.500" />
            <path d="M43.500 4L55 16.500 43.500 29 32 16.500Z" strokeLinejoin="round" />
          </svg>
          功能
        </Action>
        <Action>
          <svg width="60" height="60" viewBox="0 0 60 60" fill="none" stroke={GREY} strokeWidth="3">
            <circle cx="30" cy="31" r="26.500" />
            <g fill={GREY} stroke="none"><circle cx="18" cy="31" r="3" /><circle cx="30" cy="31" r="3" /><circle cx="42" cy="31" r="3" /></g>
          </svg>
          设自选
        </Action>
      </BottomBar>
    </Screen>
  );
}
